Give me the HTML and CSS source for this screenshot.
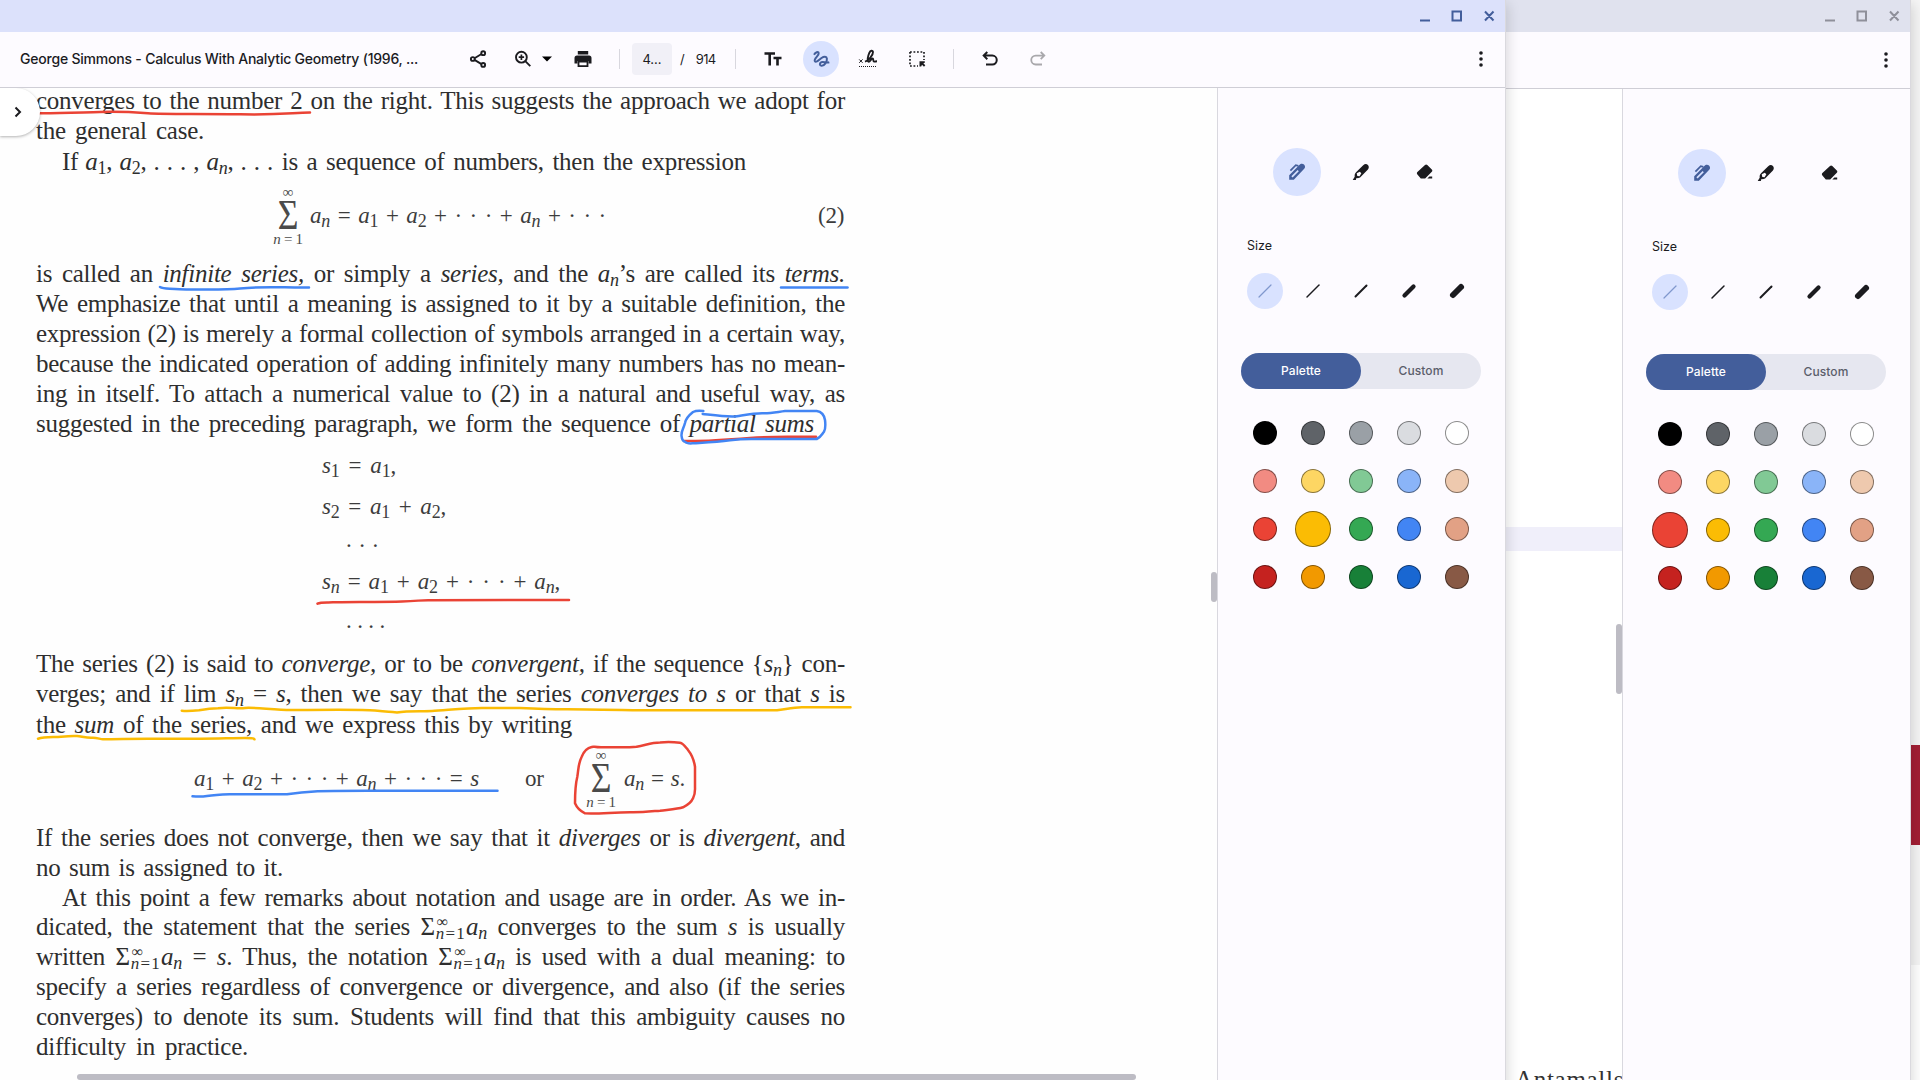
FILE: index.html
```html
<!DOCTYPE html>
<html lang="en">
<head>
<meta charset="utf-8">
<title>Gallery</title>
<link rel="stylesheet" href="styles.css">
</head>
<body>
<svg class="defs" aria-hidden="true">
  <symbol id="i-pen" viewBox="0 0 18 18"><path d="M1.2 16.8v-4.6L10.6 2.8c1.6-2.3 3.9-2.6 5.4-1.2s1.5 3.6-.5 5L5.800 16.8z" fill="#435e9b"/><path d="M2.4 7.600 7.8 2.200l2.600.7" fill="none" stroke="#435e9b" stroke-width="1.7"/><path d="M4 13.800 10.200 7.600" stroke="#d9e2ff" stroke-width="1.700"/></symbol>
  <symbol id="i-marker" viewBox="0 0 18 18"><path d="M.7 17l2-3.300c-.3-2.300.3-3.600 1.600-4.800l6.900-6.700c1.700-1.600 3.500-1.500 4.700-.2s1.300 3.100-.2 4.700l-6.900 7.100c-1.300 1.300-2.500 1.700-4.300 1.300L3.800 17z" fill="#1b1b1f"/><path d="M4.700 10.300 7.800 8.700 9.300 10.200 7.600 13.300 5.300 12.900z" fill="#fdfbff"/></symbol>
  <symbol id="i-eraser" viewBox="0 0 18 18"><path d="M1.200 11.200c-.5-.8-.4-1.400.2-2.100L9 2.100c.8-.7 1.500-.7 2.300 0l4.500 4.400c.7.8.7 1.500 0 2.200L9.200 15.400H4.800z" fill="#1b1b1f"/><path d="M11.300 15.600 13.400 13.500H16.200V15.600z" fill="#1b1b1f"/></symbol>
</svg>

<div class="desktop">
  <div class="behind"><div class="behind-red"></div></div>

  <section class="window inactive">
    <header class="titlebar">
      <svg class="wctl" viewBox="0 0 80 16"><path d="M3 12.500h10M35.500 3.500H44v9h-8.500zM68 3.500l8.500 9M76.500 3.500 68 12.500"/></svg>
    </header>
    <div class="toolbar"><svg class="kebab" viewBox="0 0 4 18"><circle cx="2" cy="3" r="1.800"/><circle cx="2" cy="9" r="1.800"/><circle cx="2" cy="15" r="1.800"/></svg></div>
    <div class="body">
      <main class="viewer other">
        <div class="band"></div>
        <p class="peek">Antamalls</p>
        <i class="vbar"></i>
      </main>
      <aside class="panel">
        <div class="tools"><span class="tool on"><svg><use href="#i-pen"/></svg></span><span class="tool"><svg><use href="#i-marker"/></svg></span><span class="tool"><svg><use href="#i-eraser"/></svg></span></div>
        <h3>Size</h3>
        <div class="sizes"><span class="on"><svg viewBox="0 0 20 20"><path class="s1" d="M4 16 16 4"/></svg></span><span><svg viewBox="0 0 20 20"><path class="s2" d="M4 16 16 4"/></svg></span><span><svg viewBox="0 0 20 20"><path class="s3" d="M4.500 15.500 15.500 4.500"/></svg></span><span><svg viewBox="0 0 20 20"><path class="s4" d="M5.500 14.500 14.500 5.500"/></svg></span><span><svg viewBox="0 0 20 20"><path class="s5" d="M6 14 14 6"/></svg></span></div>
        <div class="toggle"><b>Palette</b><span>Custom</span></div>
        <div class="swatches">
          <i class="c1"></i><i class="c2"></i><i class="c3"></i><i class="c4"></i><i class="c5"></i>
          <i class="c6"></i><i class="c7"></i><i class="c8"></i><i class="c9"></i><i class="c10"></i>
          <i class="c11 big"></i><i class="c12"></i><i class="c13"></i><i class="c14"></i><i class="c15"></i>
          <i class="c16"></i><i class="c17"></i><i class="c18"></i><i class="c19"></i><i class="c20"></i>
        </div>
      </aside>
    </div>
  </section>

  <section class="window active">
    <header class="titlebar">
      <svg class="wctl" viewBox="0 0 80 16"><path d="M3 12.500h10M35.500 3.500H44v9h-8.500zM68 3.500l8.500 9M76.500 3.500 68 12.500"/></svg>
    </header>
    <div class="toolbar">
      <h1>George Simmons - Calculus With Analytic Geometry (1996, ...</h1>
      <svg class="ic share" viewBox="0 0 20 20"><g fill="none" stroke="#1b1b1f" stroke-width="1.900"><path d="M6.500 9.200 13.500 5M6.500 10.900l7 4.200"/><circle cx="15.200" cy="4.200" r="1.900"/><circle cx="4.800" cy="10" r="1.900"/><circle cx="15.200" cy="15.900" r="1.900"/></g></svg>
      <svg class="ic zoom" viewBox="0 0 20 20"><g fill="none" stroke="#1b1b1f" stroke-width="1.900"><circle cx="8.400" cy="8.200" r="5.400"/><path d="M12.300 12.100 17.300 17.100"/><path d="M8.400 5.500v5.400M5.700 8.200h5.400" stroke-width="1.700"/></g></svg>
      <svg class="caret" viewBox="0 0 10 6"><path d="M0 .5h10L5 5.500z"/></svg>
      <svg class="ic print" viewBox="0 0 20 20"><path d="M4.800 2h10.400v3.500H4.800zM4 6.500h12a2.500 2.500 0 0 1 2.500 2.500v5.500h-3V12h-11v2.500h-3V9A2.500 2.500 0 0 1 4 6.500z" fill="#1b1b1f"/><path d="M5.500 12.500h9v4.700h-9z" fill="none" stroke="#1b1b1f" stroke-width="1.800"/></svg>
      <i class="rule r1"></i>
      <span class="pageno">4...</span><span class="slash">/</span><span class="total">914</span>
      <i class="rule r2"></i>
      <svg class="ic tt" viewBox="0 0 20 20"><path d="M1.500 4.500h10.500M6.700 4v12.500M10.500 9h8M14.500 9v7.500" fill="none" stroke="#1b1b1f" stroke-width="2.600"/></svg>
      <span class="draw"><svg class="ic" viewBox="0 0 20 20"><path d="M3 5.800C4.600 3 7.300 2.300 7.700 4.100 8.200 6.600 2.600 9.500 3.800 12 5 14.300 8.300 10.600 10.500 9 13 7.300 15.600 7.200 15.900 9.600 16.200 12.600 13.500 17 10.500 16.800 8.400 16.600 8.300 13.900 10.300 13.200 12.800 12.500 15 14.200 18.300 13.200" fill="none" stroke="#435e9b" stroke-width="2"/></svg></span>
      <svg class="ic sign" viewBox="0 0 20 20"><path d="M1.200 10.400l3.400 3.400M4.600 10.400l-3.400 3.400" stroke="#1b1b1f" stroke-width="1"/><path d="M7 12.700C10.500 11.500 15.200 6 15 3 14.800 1 12.400 1.300 11.300 3.800 10 6.800 8.800 12 10.500 12.700 12 13.200 13 9.700 14.500 9.500 15.800 9.500 14.800 12.300 16 12.600 17 12.800 17.800 12.300 19 12.300" fill="none" stroke="#1b1b1f" stroke-width="1.900"/><path d="M1 17.500h18" stroke="#1b1b1f" stroke-width="1.100" stroke-dasharray="1 1"/></svg>
      <svg class="ic select" viewBox="0 0 20 20"><path d="M3 3h14v8M3 3v14h8" fill="none" stroke="#1b1b1f" stroke-width="1.700" stroke-dasharray="1.800 1.700"/><path d="M12.500 12.200h5.300v1.500l-1.500.6 2 2-1.300 1.400-2-2-.8 1.800h-1.700z" fill="#1b1b1f"/></svg>
      <i class="rule r3"></i>
      <svg class="ic undo" viewBox="0 0 20 20"><path d="M7.300 3 3.700 6.600 7.300 10.200M4 6.600h8.300a4.400 4.400 0 0 1 0 8.900H6" fill="none" stroke="#1b1b1f" stroke-width="2"/></svg>
      <svg class="ic redo" viewBox="0 0 20 20"><path d="M12.700 3l3.600 3.600-3.600 3.600M16 6.600H7.700a4.400 4.400 0 0 0 0 8.900H14" fill="none" stroke="#a9a8ac" stroke-width="1.800"/></svg>
      <svg class="kebab" viewBox="0 0 4 18"><circle cx="2" cy="3" r="1.800"/><circle cx="2" cy="9" r="1.800"/><circle cx="2" cy="15" r="1.800"/></svg>
    </div>
    <div class="body">
      <main class="viewer">
        <article class="page">
          <div class="para p1">
            <p class="l">converges to the number 2 on the right. This suggests the approach we adopt for</p>
            <p class="l w168">the general case.</p>
            <p class="l ind w684"><span class="run">If <em>a</em><sub>1</sub>, <em>a</em><sub>2</sub>, . . . , <em>a<sub>n</sub></em>, . . .</span> is a sequence of numbers, then the expression</p>
          </div>
          <div class="eq e1">
            <div class="sum"><span>∞</span><span class="big-s">Σ</span><span class="low"><em>n</em> = 1</span></div>
            <p class="m w296"><em>a<sub>n</sub></em> = <em>a</em><sub>1</sub> + <em>a</em><sub>2</sub> + · · · + <em>a<sub>n</sub></em> + · · ·</p>
            <p class="m num">(2)</p>
          </div>
          <div class="para p2">
            <p class="l">is called an <em>infinite series,</em> or simply a <em>series,</em> and the <em>a<sub>n</sub></em>’s are called its <em>terms.</em></p>
            <p class="l">We emphasize that until a meaning is assigned to it by a suitable definition, the</p>
            <p class="l">expression (2) is merely a formal collection of symbols arranged in a certain way,</p>
            <p class="l">because the indicated operation of adding infinitely many numbers has no mean-</p>
            <p class="l">ing in itself. To attach a numerical value to (2) in a natural and useful way, as</p>
            <p class="l w778">suggested in the preceding paragraph, we form the sequence of <em>partial sums</em></p>
          </div>
          <div class="defs-list">
            <p class="m w73"><em>s</em><sub>1</sub> = <em>a</em><sub>1</sub>,</p>
            <p class="m w124"><em>s</em><sub>2</sub> = <em>a</em><sub>1</sub> + <em>a</em><sub>2</sub>,</p>
            <p class="m dots w32">. . .</p>
            <p class="m w238"><em>s<sub>n</sub></em> = <em>a</em><sub>1</sub> + <em>a</em><sub>2</sub> + · · · + <em>a<sub>n</sub></em>,</p>
            <p class="m dots w39">. . . .</p>
          </div>
          <div class="para p3">
            <p class="l">The series (2) is said to <em>converge,</em> or to be <em>convergent,</em> if the sequence {<em>s<sub>n</sub></em>} con-</p>
            <p class="l">verges; and if lim <em>s<sub>n</sub></em> = <em>s</em>, then we say that the series <em>converges to s</em> or that <em>s</em> is</p>
            <p class="l w536">the <em>sum</em> of the series, and we express this by writing</p>
          </div>
          <div class="eq e2">
            <p class="m w285"><em>a</em><sub>1</sub> + <em>a</em><sub>2</sub> + · · · + <em>a<sub>n</sub></em> + · · · = <em>s</em></p>
            <p class="m or">or</p>
            <div class="sum"><span>∞</span><span class="big-s">Σ</span><span class="low"><em>n</em> = 1</span></div>
            <p class="m w61"><em>a<sub>n</sub></em> = <em>s</em>.</p>
          </div>
          <div class="para p4">
            <p class="l">If the series does not converge, then we say that it <em>diverges</em> or is <em>divergent,</em> and</p>
            <p class="l w247">no sum is assigned to it.</p>
            <p class="l ind">At this point a few remarks about notation and usage are in order. As we in-</p>
            <p class="l">dicated, the statement that the series <span class="isum">Σ<span class="lim"><em>n</em>=1<span>∞</span></span></span><em>a<sub>n</sub></em> converges to the sum <em>s</em> is usually</p>
            <p class="l">written <span class="isum">Σ<span class="lim"><em>n</em>=1<span>∞</span></span></span><em>a<sub>n</sub></em> = <em>s</em>. Thus, the notation <span class="isum">Σ<span class="lim"><em>n</em>=1<span>∞</span></span></span><em>a<sub>n</sub></em> is used with a dual meaning: to</p>
            <p class="l">specify a series regardless of convergence or divergence, and also (if the series</p>
            <p class="l">converges) to denote its sum. Students will find that this ambiguity causes no</p>
            <p class="l w212">difficulty in practice.</p>
          </div>
        </article>
        <svg class="ink" viewBox="0 88 1217 992">
          <g stroke="#ea4335">
            <path d="M37 113.300C60 113.500 80 112.500 100 112S130 112 148 113.200 200 113.500 240 114.300 290 113 310 112.500"/>
            <path d="M684 441C705 441.500 725 440 750 438S790 437.200 816 436.700"/>
            <path d="M317.500 603.700C321 601.800 326 602.600 333 602.300S385 602 402 601.500 420 600 430 600.200 530 600 569 600"/>
            <path d="M636.700 746.700C625 748 612 747 603 747.300S594 746 591.700 747C587 748 584 751 581.700 756.700 578 764 578.500 770 577.300 776.700 575.500 784 575 794 575 803.300 577 808 581 811.500 585 813.300 600 814 615 812 633 812.300 645 812.300 655 811 660 810.700 670 809.500 678 809 683 807.300 688 805 691 803 693 798.300 695.500 794 695 791 695 786.700V766.700C694 760 692 755 688 750 685 746 683 743 680 742.700 673 742 665 742 660 742.500 651 742.500 645 745.500 636.700 746.700"/>
          </g>
          <g stroke="#4285f4">
            <path d="M160 287C163 289 168 288.500 175 289S225 290.300 240 288.500 270 287 285 287.300 300 287.500 309 287.600"/>
            <path d="M781 287.500H847.500"/>
            <path d="M703.300 411C699 410.500 696 410.500 693 412 688 416 685.500 420 685 423 683.500 429 680.500 432 681.700 436.700 682 440 683.500 441.500 685 441.700 687 444 690 443.500 693.300 443.300 706 442.500 717 442 730 440.300S748 439 757 439H816.700C821 437 822 434 824 431.700 826 428 825.500 424 825 420 824 414 820 411.500 816.700 411H785C777 412 771 413.500 763 413.300S745 415 737 416.200 712 415 702.700 414"/>
            <path d="M192.500 796.300C198 796.800 204 796.500 207 796 214 795 222 794.600 229.600 794.300H287C296 793 306 792 317.600 791.300S380 791 402 790.700H497.500"/>
          </g>
          <g stroke="#fbbc04">
            <path d="M181.800 710.700C187 711.200 193 710.800 199 710.300 206 709 211 708.200 218 708.200 230 707 238 709 245 708S275 710 291 710 360 709 375 710.500 387 711.500 397 712.500C408 710.500 420 711.500 432 711S465 708 482 708H520C540 709 550 709.300 567 709.300S620 710 640 710.300H777C785 709.500 794 707 803 707.300H850.500"/>
            <path d="M38 738.700C45 736.500 55 737.500 61 736.700 68 736 73 735.700 77 736S87 738 92 737.700 100 739.300 103 739.300 140 738.500 153 738.700H200C220 738.500 235 738 245 738S252 738 254.500 739.300"/>
          </g>
        </svg>
        <div class="expand"><svg viewBox="0 0 10 12"><path d="M2.500 1.500 7 6 2.500 10.500"/></svg></div>
        <i class="vbar"></i>
        <i class="hbar"></i>
      </main>
      <aside class="panel">
        <div class="tools"><span class="tool on"><svg><use href="#i-pen"/></svg></span><span class="tool"><svg><use href="#i-marker"/></svg></span><span class="tool"><svg><use href="#i-eraser"/></svg></span></div>
        <h3>Size</h3>
        <div class="sizes"><span class="on"><svg viewBox="0 0 20 20"><path class="s1" d="M4 16 16 4"/></svg></span><span><svg viewBox="0 0 20 20"><path class="s2" d="M4 16 16 4"/></svg></span><span><svg viewBox="0 0 20 20"><path class="s3" d="M4.500 15.500 15.500 4.500"/></svg></span><span><svg viewBox="0 0 20 20"><path class="s4" d="M5.500 14.500 14.500 5.500"/></svg></span><span><svg viewBox="0 0 20 20"><path class="s5" d="M6 14 14 6"/></svg></span></div>
        <div class="toggle"><b>Palette</b><span>Custom</span></div>
        <div class="swatches">
          <i class="c1"></i><i class="c2"></i><i class="c3"></i><i class="c4"></i><i class="c5"></i>
          <i class="c6"></i><i class="c7"></i><i class="c8"></i><i class="c9"></i><i class="c10"></i>
          <i class="c11"></i><i class="c12 big"></i><i class="c13"></i><i class="c14"></i><i class="c15"></i>
          <i class="c16"></i><i class="c17"></i><i class="c18"></i><i class="c19"></i><i class="c20"></i>
        </div>
      </aside>
    </div>
  </section>
</div>
</body>
</html>
```
FILE: styles.css
```css
* { box-sizing: border-box; }
body { margin: 0; font-family: Inter, "Open Sans", sans-serif; color: #1b1b1f; overflow: hidden; }
h1, h3, p { margin: 0; font-weight: 500; }
svg { display: block; flex: none; }
.defs { position: absolute; width: 0; height: 0; }

/* desktop and windows */
.desktop { position: relative; width: 1920px; height: 1080px; overflow: hidden; background: #fff; }
.behind { height: 965px; padding-top: 745px; background: #f5f5f5; }
.behind-red { height: 100px; background: #a31f34; }
.window { position: absolute; top: 0; width: 1505px; height: 1100px; display: flex; flex-direction: column; background: #fdfbff; box-shadow: 0 0 0 1px #dad9de, 3px 4px 12px rgba(0,0,0,.14); }
.window.active { left: 0; }
.window.inactive { left: 405px; }
.titlebar { flex: none; display: flex; justify-content: flex-end; height: 32px; padding: 8px 8px 0 0; background: #dce1fb; }
.inactive .titlebar { background: #e0e2ee; }
.wctl { width: 80px; height: 16px; fill: none; stroke: #435e9b; stroke-width: 2; }
.inactive .wctl { stroke: #8f909a; }
.toolbar { flex: none; display: flex; align-items: center; height: 56px; padding: 0 22px 2px 20px; border-bottom: 1px solid #cfced6; }
.inactive .toolbar { height: 57px; padding-bottom: 0; }
.kebab { width: 4px; height: 18px; margin-left: auto; fill: #1b1b1f; }
.toolbar h1 { width: 399px; font-size: 14px; letter-spacing: -.21px; white-space: nowrap; }
.ic { width: 20px; height: 20px; }
.share { margin-left: 49px; }
.zoom { margin-left: 25px; }
.caret { width: 10px; height: 6px; margin-left: 9px; }
.print { margin-left: 21px; }
.rule { width: 1px; height: 20px; background: #d8d7de; }
.r1 { margin-left: 26px; }
.pageno { width: 40px; height: 32px; margin-left: 12px; border-radius: 4px; background: #f1f0f7; font-size: 13px; line-height: 33px; text-align: center; }
.slash { margin-left: 8px; font-size: 13px; }
.total { width: 22px; margin-left: 11px; font-size: 13px; letter-spacing: -.6px; }
.r2 { margin-left: 17px; }
.tt { margin-left: 27px; }
.draw { display: flex; align-items: center; justify-content: center; width: 36px; height: 36px; margin-left: 20px; border-radius: 50%; background: #d9e2ff; }
.sign { margin-left: 19px; }
.select { margin-left: 29px; }
.r3 { margin-left: 26px; }
.undo { margin-left: 26px; }
.redo { margin-left: 28px; }
.body { flex: 1; display: flex; min-height: 0; }
.viewer { position: relative; width: 1217px; overflow: hidden; background: #fefefe; }
.vbar { position: absolute; right: 0; top: 484px; width: 6px; height: 30px; border-radius: 3px; background: #bdbcc4; }
.hbar { position: absolute; left: 77px; top: 986px; width: 1059px; height: 6px; border-radius: 3px; background: #bdbcc4; }
.expand { position: absolute; left: 0; top: 0; display: flex; align-items: center; width: 40px; height: 48px; padding-left: 13px; border-radius: 0 24px 24px 0; background: #fff; box-shadow: 0 1px 3px rgba(0,0,0,.3); }
.expand svg { width: 10px; height: 12px; fill: none; stroke: #1b1b1f; stroke-width: 2; }
.other { padding-top: 438px; background: #fff; }
.other .vbar { top: 535px; height: 70px; }
.band { height: 24px; background: #f0effa; }
.peek { margin: 514px 0 0 1110px; width: 110px; font: 25px/30px "Liberation Serif", serif; letter-spacing: .700px; color: #333; }

/* book page */
.page { width: 845px; margin-top: -2.500px; padding-left: 36px; font-family: "Liberation Serif", serif; font-size: 25px; letter-spacing: -.25px; color: #2e2e2e; }
.l, .m { width: 100%; height: 30px; line-height: 30px; font-weight: 400; white-space: nowrap; text-align-last: justify; }
.p1 .l { height: 30.600px; line-height: 30.600px; }
.p2 .l { height: 30.100px; }
.p3 .l { height: 30.250px; }
.p4 .l { height: 29.900px; }
.run { display: inline-block; width: 211px; text-align-last: justify; letter-spacing: -.3px; }
sub { font-size: 18px; line-height: 0; vertical-align: -4px; }
.m { font-size: 23px; letter-spacing: -.2px; flex: none; color: #3c3c3c; }
.ind { margin-left: 26px; }
.l.ind { width: 783px; }
.l.w168 { width: 168px; } .l.ind.w684 { width: 684px; } .l.w778 { width: 778px; } .l.w536 { width: 536px; } .l.w247 { width: 247px; } .l.w212 { width: 212px; }
.w296 { width: 296px; } .w73 { width: 74px; } .w124 { width: 124px; } .w32 { width: 32px; } .w238 { width: 238px; } .w39 { width: 39px; } .w285 { width: 285px; } .w61 { width: 61px; }
.eq { display: flex; align-items: center; }
.e1 { height: 81.600px; padding: 0 0 4px 234px; }
.e2 { height: 83px; padding: 0 0 4px 158px; }
.sum { display: flex; flex-direction: column; align-items: center; width: 36px; font-size: 15px; letter-spacing: -.3px; white-space: nowrap; line-height: 15px; color: #4a4a4a; }
.sum .big-s { font-size: 42px; line-height: 30px; transform: scaleX(.85); }
.sum .low { padding-top: 2px; }
.e1 .sum { margin-right: 4px; }
.e2 .sum { margin: 0 5px 0 39px; }
.num { width: 27px; margin-left: auto; }
.or { width: 19px; margin-left: 46px; }
.defs-list { height: 209.600px; padding: 12px 0 0 286px; }
.defs-list .m:nth-child(2) { margin-top: 11px; }
.defs-list .m:nth-child(3) { margin-top: 3px; }
.defs-list .m:nth-child(4) { margin-top: 12px; }
.defs-list .m:nth-child(5) { margin-top: 9px; }
.defs-list .dots { margin-left: 24px; }
.lim { position: relative; margin-left: 1px; font-size: 17px; vertical-align: -4px; line-height: 0; letter-spacing: 1.200px; }
.lim span { position: absolute; left: 1px; top: -2px; font-size: 16px; }
.ink { position: absolute; left: 0; top: 0; width: 1217px; height: 992px; fill: none; stroke-width: 2.500; stroke-linecap: round; stroke-linejoin: round; }

/* annotation panel */
.panel { width: 288px; padding: 60px 24px 0 23px; border-left: 1px solid #d9d8df; background: #fdfbff; }
.tools { display: flex; justify-content: center; gap: 16px; }
.tool { display: flex; align-items: center; justify-content: center; width: 48px; height: 48px; border-radius: 50%; }
.tool svg { width: 18px; height: 18px; }
.on { background: #d9e2ff; }
.panel h3 { margin: 41px 0 0 6px; font-size: 12.500px; line-height: 18px; font-weight: 400; }
.sizes { display: flex; gap: 12px; margin: 18px 0 0 6px; }
.sizes span { display: flex; align-items: center; justify-content: center; width: 36px; height: 36px; border-radius: 50%; }
.sizes svg { width: 20px; height: 20px; fill: none; stroke: #1b1b1f; stroke-linecap: round; }
.sizes .s1 { stroke: #8098cd; stroke-width: 1.200; }
.s2 { stroke-width: 1.500; }
.s3 { stroke-width: 2; }
.s4 { stroke-width: 4.200; }
.s5 { stroke-width: 6; }
.toggle { display: flex; width: 240px; height: 36px; margin-top: 44px; border-radius: 18px; background: #e6e7f0; font-size: 12px; line-height: 36px; text-align: center; color: #5b5e6b; font-weight: 500; }
.toggle b, .toggle span { width: 120px; font-weight: 500; letter-spacing: .1px; }
.toggle b { border-radius: 18px; background: #435e9b; color: #fff; }
.swatches { display: grid; grid-template-columns: repeat(5, 48px); grid-auto-rows: 48px; place-items: center; margin-top: 20px; }
.swatches i { width: 24px; height: 24px; border: 1px solid rgba(0,0,0,.45); border-radius: 50%; }
.swatches .big { width: 36px; height: 36px; }
.c1 { background: #000; } .c2 { background: #5f6368; } .c3 { background: #9aa0a6; } .c4 { background: #dadce0; } .c5 { background: #fff; }
.c6 { background: #f28b82; } .c7 { background: #fdd663; } .c8 { background: #81c995; } .c9 { background: #8ab4f8; } .c10 { background: #eec9ae; }
.c11 { background: #ea4335; } .c12 { background: #fbbc04; } .c13 { background: #34a853; } .c14 { background: #4285f4; } .c15 { background: #e2a185; }
.c16 { background: #c5221f; } .c17 { background: #f29900; } .c18 { background: #188038; } .c19 { background: #1967d2; } .c20 { background: #885945; }
```
